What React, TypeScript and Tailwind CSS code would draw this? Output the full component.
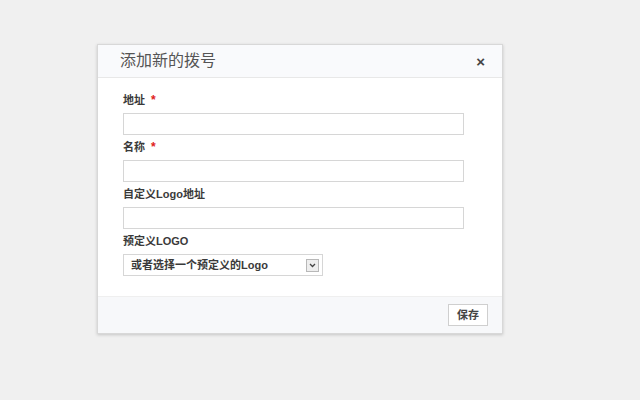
import React from "react";

const cjk = { fontFamily: '"Liberation Sans", "Noto Sans CJK SC", sans-serif' };

function Field({ label, required }: { label: string; required?: boolean }) {
  return (
    <>
      <div className="h-[16px] flex items-center text-[11px] font-bold text-[#3a3a3a] leading-none">
        {label}
        {required && <span className="ml-[6px] text-[#e02020] text-[12px]">*</span>}
      </div>
      <input
        className="mt-[5px] mb-[4px] h-[22px] w-[341px] border border-[#d6d6d6] bg-white outline-none"
        style={cjk}
      />
    </>
  );
}

export default function App() {
  return (
    <div className="w-[640px] h-[400px] bg-[#f0f0f0] pl-[97px] pt-[44px]" style={cjk}>
      <div className="w-[406px] h-[290px] bg-white border border-[#d8d8d8] shadow-[0_1px_3px_rgba(0,0,0,0.18)] flex flex-col">
        {/* header */}
        <div className="h-[33px] flex-none bg-[#f9fafc] border-b border-[#e8e8e8] flex items-center justify-between pl-[22px] pr-[17px]">
          <span className="text-[16px] text-[#555]">添加新的拨号</span>
          <span className="text-[15px] font-bold text-[#444] leading-none">×</span>
        </div>

        {/* body */}
        <div className="flex-1 pt-[14px] pl-[25px]">
          <Field label="地址" required />
          <Field label="名称" required />
          <Field label="自定义Logo地址" />
          <div className="h-[16px] flex items-center text-[11px] font-bold text-[#3a3a3a] leading-none">
            预定义LOGO
          </div>
          <div className="mt-[5px] h-[22px] w-[200px] border border-[#d6d6d6] bg-white flex items-center justify-between pl-[7px] pr-[3px]">
            <span className="text-[11px] font-bold text-[#3a3a3a]">或者选择一个预定义的Logo</span>
            <span className="w-[13px] h-[13px] border border-[#b8b8b8] bg-[#eeeeee] flex items-center justify-center">
              <svg width="7" height="5" viewBox="0 0 7 5">
                <path d="M1 1 L3.5 3.5 L6 1" stroke="#444" strokeWidth="1.3" fill="none" />
              </svg>
            </span>
          </div>
        </div>

        {/* footer */}
        <div className="h-[37px] flex-none bg-[#f7f8fa] border-t border-[#efefef] flex items-center justify-end pr-[14px]">
          <button className="w-[40px] h-[22px] border border-[#cfcfcf] bg-white text-[11px] font-bold text-[#444]" style={cjk}>
            保存
          </button>
        </div>
      </div>
    </div>
  );
}
